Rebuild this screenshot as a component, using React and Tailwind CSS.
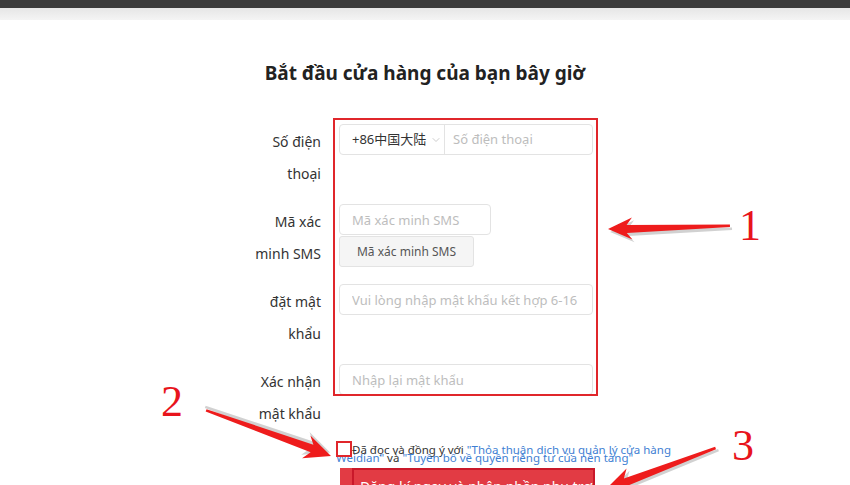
// App.jsx
import React from 'react';
import { ChevronDown } from 'lucide-react';

const font = { fontFamily: '"Noto Sans", "Noto Sans CJK SC", sans-serif' };

// arrow pointing left, tip at origin; rotated/translated per annotation
function Arrow({ x, y, angle, len, head = 12 }) {
  const pts = `0,0 ${head * 2.2},${-head} ${head * 1.7},-3.5 ${len},-1.5 ${len},1 ${head * 1.7},4.5 ${head * 2.2},${head}`;
  return (
    <g transform={`translate(${x} ${y}) rotate(${angle})`}>
      <polygon points={pts} transform="translate(2 3)" fill="#000" opacity="0.18" />
      <polygon points={pts} fill="#ee1c1c" />
    </g>
  );
}

function Field({ placeholder, className = '' }) {
  return (
    <input
      type="text"
      placeholder={placeholder}
      className={`h-[31px] border border-[#e3e3e3] rounded-[4px] px-3 text-[13px] text-[#333] placeholder-[#bdbdbd] outline-none ${className}`}
    />
  );
}

function Row({ label, children }) {
  return (
    <div className="flex">
      <div className="w-[76px] pt-[2px] text-right text-[14px] leading-[32px] text-[#333]">{label}</div>
      <div className="ml-[18px] w-[254px]">{children}</div>
    </div>
  );
}

export default function App() {
  return (
    <div className="relative w-[850px] h-[485px] overflow-hidden bg-white" style={font}>
      <div className="h-[8px] bg-[#3b3b3b]" />
      <div className="h-[12px] bg-gradient-to-b from-[#e6e6e6] to-[#f4f4f4]" />

      <h1 className="mt-[39px] text-center text-[19px] leading-[28px] font-bold text-[#222]">
        Bắt đầu cửa hàng của bạn bây giờ
      </h1>

      <div className="mt-[37px] pl-[245px] flex flex-col gap-[14px]">
        <Row label="Số điện thoại">
          <div className="flex h-[31px] border border-[#e3e3e3] rounded-[4px]">
            <div className="w-[105px] flex items-center pl-3 gap-1 border-r border-[#e3e3e3] text-[13px] text-[#333]">
              +86中国大陆
              <ChevronDown className="w-3 h-3 text-[#bbb]" strokeWidth={1.5} />
            </div>
            <input
              type="text"
              placeholder="Số điện thoại"
              className="flex-1 min-w-0 px-2 text-[13px] placeholder-[#bdbdbd] outline-none bg-transparent"
            />
          </div>
        </Row>

        <Row label="Mã xác minh SMS">
          <Field placeholder="Mã xác minh SMS" className="w-[152px]" />
          <button className="mt-[1px] block h-[31px] w-[135px] border border-[#e3e3e3] rounded-[3px] bg-[#f5f5f5] text-[12px] text-[#555]">
            Mã xác minh SMS
          </button>
        </Row>

        <Row label="đặt mật khẩu">
          <Field placeholder="Vui lòng nhập mật khẩu kết hợp 6-16 ký tự" className="w-[254px]" />
        </Row>

        <Row label="Xác nhận mật khẩu">
          <Field placeholder="Nhập lại mật khẩu" className="w-[254px]" />
        </Row>
      </div>

      {/* agreement */}
      <div className="relative mt-[11px] ml-[336px] w-[340px] h-[22px]">
        <span className="absolute left-0 top-0 w-[16px] h-[16px] border-2 border-[#e0262b] bg-white" />
        <p className="pt-[5px] indent-[16px] text-[11.5px] leading-[8px] text-[#333]">
          Đã đọc và đồng ý với <span className="text-[#3f7fd3]">"Thỏa thuận dịch vụ quản lý cửa hàng Weidian"</span> và{' '}
          <span className="text-[#3f7fd3]">"Tuyên bố về quyền riêng tư của nền tảng"</span>
        </p>
      </div>

      <div className="relative mt-[5px] ml-[340px] w-[255px] h-[36px] bg-[#e23b44] overflow-hidden">
        <div className="absolute left-[12px] top-0 right-0 bottom-0 border-2 border-[#c9182a]" />
        <div className="pl-[20px] pt-[8px] whitespace-nowrap text-[14px] text-white">
          Đăng kí ngay và nhận phần phụ trợ cửa hàng
        </div>
      </div>

      {/* annotations */}
      <div className="absolute left-[333px] top-[118px] w-[265px] h-[278px] border-2 border-[#e0262b] pointer-events-none" />

      <svg className="absolute left-0 top-0 pointer-events-none" width="850" height="485">
        <Arrow x={608} y={229} angle={-1.4} len={122} head={11} />
        <Arrow x={331} y={456} angle={-159.8} len={133} head={12} />
        <Arrow x={606} y={489} angle={-20.4} len={117} head={12} />
      </svg>

      <span className="absolute left-[739px] top-[204px] text-[44px] leading-none text-[#e8141c]" style={{ fontFamily: '"Liberation Serif", serif' }}>1</span>
      <span className="absolute left-[161px] top-[380px] text-[44px] leading-none text-[#e8141c]" style={{ fontFamily: '"Liberation Serif", serif' }}>2</span>
      <span className="absolute left-[732px] top-[424px] text-[44px] leading-none text-[#e8141c]" style={{ fontFamily: '"Liberation Serif", serif' }}>3</span>
    </div>
  );
}
